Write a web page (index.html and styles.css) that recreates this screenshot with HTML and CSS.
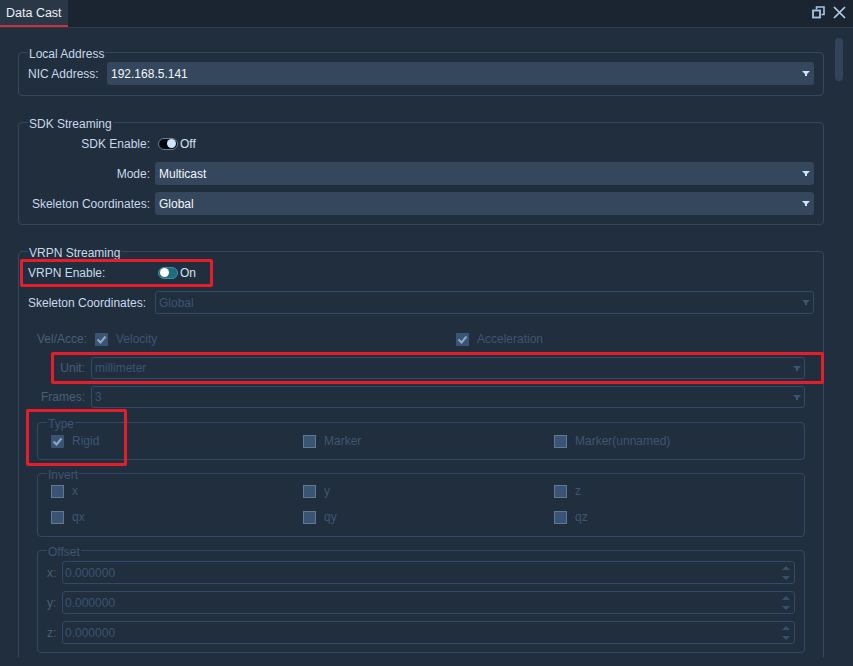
FILE: index.html
```html
<!DOCTYPE html>
<html>
<head>
<meta charset="utf-8">
<link rel="stylesheet" href="styles.css">
</head>
<body>
<div class="tabbar">
  <div class="tab">Data Cast</div>
  <div class="tools">
    <svg class="ico" width="13" height="13" viewBox="0 0 13 13"><path d="M4.5 3.5V1H12V8.5H9.5" fill="none" stroke="#a9c5e5" stroke-width="1.6"/><rect x="1" y="4.5" width="7" height="7" fill="none" stroke="#a9c5e5" stroke-width="1.8"/></svg>
    <svg class="ico" width="13" height="13" viewBox="0 0 13 13"><path d="M1 1L12 12M12 1L1 12" stroke="#b6cde8" stroke-width="1.7"/></svg>
  </div>
</div>
<div class="main">
  <div class="scroll">
    <fieldset class="group local">
      <legend>Local Address</legend>
      <div class="form form-local">
        <span>NIC Address:</span>
        <div class="combo"><span>192.168.5.141</span><svg class="arrow" width="8" height="5" viewBox="0 0 8 5"><path d="M0 0H8L5 3V5H3V3Z" fill="#cfe4fb"/></svg></div>
      </div>
    </fieldset>

    <fieldset class="group">
      <legend>SDK Streaming</legend>
      <div class="form form-sdk">
        <span class="rlab">SDK Enable:</span>
        <div class="toggle"><span class="pill off"><span class="knob"></span></span><span>Off</span></div>
        <span class="rlab">Mode:</span>
        <div class="combo"><span>Multicast</span><svg class="arrow" width="8" height="5" viewBox="0 0 8 5"><path d="M0 0H8L5 3V5H3V3Z" fill="#cfe4fb"/></svg></div>
        <span class="rlab">Skeleton Coordinates:</span>
        <div class="combo"><span>Global</span><svg class="arrow" width="8" height="5" viewBox="0 0 8 5"><path d="M0 0H8L5 3V5H3V3Z" fill="#cfe4fb"/></svg></div>
      </div>
    </fieldset>

    <fieldset class="group vrpn">
      <legend>VRPN Streaming</legend>
      <div class="form form-sdk">
        <div class="enable-row mark-enable">
          <span class="enable-lab">VRPN Enable:</span>
          <div class="toggle"><span class="pill on"><span class="knob"></span></span><span>On</span></div>
        </div>
        <span>Skeleton Coordinates:</span>
        <div class="combo dis"><span>Global</span><svg class="arrow" width="8" height="5" viewBox="0 0 8 5"><path d="M0 0H8L5 3V5H3V3Z" fill="#3b5575"/></svg></div>
      </div>

      <div class="inner">
        <div class="velrow">
          <span class="dlab vlab">Vel/Acce:</span>
          <div class="cell1"><span class="cb checked"><svg width="11" height="11" viewBox="0 0 11 11"><path d="M1.5 5.5L4.5 8.5L9.5 2.5" fill="none" stroke="#8ea8c6" stroke-width="2"/></svg></span><span class="dtext">Velocity</span></div>
          <div class="cell2"><span class="cb checked"><svg width="11" height="11" viewBox="0 0 11 11"><path d="M1.5 5.5L4.5 8.5L9.5 2.5" fill="none" stroke="#8ea8c6" stroke-width="2"/></svg></span><span class="dtext">Acceleration</span></div>
        </div>
        <div class="subform mark-unit">
          <span class="dlab rlab">Unit:</span>
          <div class="combo dis small"><span>millimeter</span><svg class="arrow" width="8" height="5" viewBox="0 0 8 5"><path d="M0 0H8L5 3V5H3V3Z" fill="#3b5575"/></svg></div>
        </div>
        <div class="subform">
          <span class="dlab rlab">Frames:</span>
          <div class="combo dis small"><span>3</span><svg class="arrow" width="8" height="5" viewBox="0 0 8 5"><path d="M0 0H8L5 3V5H3V3Z" fill="#3b5575"/></svg></div>
        </div>

        <div class="typewrap mark-type">
          <fieldset class="sub type">
            <legend>Type</legend>
            <div class="cbgrid">
              <div class="cbitem"><span class="cb checked"><svg width="11" height="11" viewBox="0 0 11 11"><path d="M1.5 5.5L4.5 8.5L9.5 2.5" fill="none" stroke="#8ea8c6" stroke-width="2"/></svg></span><span class="dtext">Rigid</span></div>
              <div class="cbitem"><span class="cb"></span><span class="dtext">Marker</span></div>
              <div class="cbitem"><span class="cb"></span><span class="dtext">Marker(unnamed)</span></div>
            </div>
          </fieldset>
        </div>

        <fieldset class="sub invert">
          <legend>Invert</legend>
          <div class="cbgrid">
            <div class="cbitem"><span class="cb"></span><span class="dtext">x</span></div>
            <div class="cbitem"><span class="cb"></span><span class="dtext">y</span></div>
            <div class="cbitem"><span class="cb"></span><span class="dtext">z</span></div>
            <div class="cbitem"><span class="cb"></span><span class="dtext">qx</span></div>
            <div class="cbitem"><span class="cb"></span><span class="dtext">qy</span></div>
            <div class="cbitem"><span class="cb"></span><span class="dtext">qz</span></div>
          </div>
        </fieldset>

        <fieldset class="sub offset">
          <legend>Offset</legend>
          <div class="spinform">
            <span class="dlab">x:</span>
            <div class="spin"><span>0.000000</span><span class="spinbtns"><svg width="8" height="4" viewBox="0 0 8 4"><path d="M4 0L8 4H0Z" fill="#36506f"/></svg><svg width="8" height="4" viewBox="0 0 8 4"><path d="M0 0H8L4 4Z" fill="#36506f"/></svg></span></div>
            <span class="dlab">y:</span>
            <div class="spin"><span>0.000000</span><span class="spinbtns"><svg width="8" height="4" viewBox="0 0 8 4"><path d="M4 0L8 4H0Z" fill="#36506f"/></svg><svg width="8" height="4" viewBox="0 0 8 4"><path d="M0 0H8L4 4Z" fill="#36506f"/></svg></span></div>
            <span class="dlab">z:</span>
            <div class="spin"><span>0.000000</span><span class="spinbtns"><svg width="8" height="4" viewBox="0 0 8 4"><path d="M4 0L8 4H0Z" fill="#36506f"/></svg><svg width="8" height="4" viewBox="0 0 8 4"><path d="M0 0H8L4 4Z" fill="#36506f"/></svg></span></div>
          </div>
        </fieldset>
      </div>
    </fieldset>
  </div>
  <div class="vscroll"><div class="handle"></div></div>
</div>
</body>
</html>
```

FILE: styles.css
```css
*, *::before, *::after { box-sizing: border-box; }
html, body { margin: 0; padding: 0; }
body {
  width: 853px;
  height: 666px;
  overflow: hidden;
  background: #212e3d;
  font-family: "Liberation Sans", Arial, sans-serif;
  font-size: 12px;
  color: #c8d9ec;
}

.tabbar {
  height: 28px;
  background: #1b2531;
  border-bottom: 1px solid #2e3c4d;
  display: flex;
  justify-content: space-between;
}
.tab {
  width: 68px;
  height: 27px;
  background: #2a3747;
  border-bottom: 2px solid #cc2f3b;
  color: #eaf0f8;
  font-size: 12.5px;
  line-height: 14px;
  padding: 6px 0 0 6px;
}
.tools {
  display: flex;
  gap: 8px;
  padding: 6px 7px 0 0;
}
.ico { display: block; }

.main {
  display: flex;
  height: 638px;
}
.scroll {
  position: relative;
  width: 824px;
  height: 629px;
  overflow: hidden;
  padding: 15px 0 0 18px;
}
.vscroll {
  margin-left: 11px;
  width: 8px;
  padding-top: 10px;
}
.handle {
  height: 43px;
  background: #33435a;
  border-radius: 4px;
}

fieldset { margin: 0; min-width: 0; }
legend {
  padding: 4px 1px 0 1px;
  line-height: 14px;
  font-size: 12px;
}

.group {
  margin: 0 0 17px 0;
  border: 1px solid #37475b;
  border-radius: 4px;
  padding: 1px 9px 9px 9px;
}
.group legend { color: #c8d9ec; }
.local { padding-bottom: 10px; }

.form {
  display: grid;
  column-gap: 5px;
  row-gap: 7px;
  align-items: center;
}
.form-local { grid-template-columns: 74px 1fr; }
.form-sdk { grid-template-columns: 122px 1fr; }
.rlab { text-align: right; }

.combo {
  height: 23px;
  background: #35475c;
  border-radius: 3px;
  display: flex;
  align-items: center;
  justify-content: space-between;
  padding: 0 4px 0 4px;
  color: #f2f7fd;
}
.combo.dis {
  background: transparent;
  border: 1px solid #2f4a6a;
  color: #3b5473;
  padding: 0 3px 0 3px;
}
.combo.small { height: 22px; }
.arrow { display: block; }

.toggle {
  display: flex;
  align-items: center;
  gap: 2px;
  margin-left: 3px;
  height: 23px;
  color: #d6e4f3;
}
.pill {
  width: 20px;
  height: 12px;
  border-radius: 6px;
  display: flex;
  align-items: center;
  padding: 0 1px;
}
.pill.off {
  background: #04070b;
  border: 1px solid #6d7f95;
  justify-content: flex-end;
}
.pill.on {
  background: #1d6c80;
  border: 1px solid #3f8ea3;
  justify-content: flex-start;
}
.knob {
  width: 9px;
  height: 9px;
  border-radius: 50%;
}
.off .knob { background: #cfe5fb; }
.on .knob { background: #ffffff; }

.enable-row {
  grid-column: 1 / 3;
  display: flex;
  align-items: center;
  height: 23px;
  position: relative;
}
.enable-lab { width: 130px; }
.enable-row .toggle { margin-left: 0; }

/* red annotation boxes drawn over content */
.mark-enable::after,
.mark-unit::after,
.mark-type::after {
  content: "";
  position: absolute;
  border: 3px solid #e61e2b;
  border-radius: 2px;
  pointer-events: none;
}
.mark-enable::after { left: -8px; top: -2px; width: 193px; height: 28px; }
.mark-unit { position: relative; }
.mark-unit::after { left: 14px; top: -5px; width: 773px; height: 32px; }
.mark-type { position: relative; }
.mark-type::after { left: -11px; top: -4px; width: 101px; height: 57px; }

.inner { margin: 14px 9px 0 9px; }
.dlab { color: #4a5f79; }
.dtext { color: #3d5674; }

.velrow {
  display: flex;
  align-items: center;
  height: 22px;
}
.vlab { width: 58px; }
.cell1 { width: 361px; display: flex; align-items: center; gap: 8px; }
.cell2 { display: flex; align-items: center; gap: 8px; }

.subform {
  display: grid;
  grid-template-columns: 48px 1fr;
  column-gap: 6px;
  align-items: center;
  margin-top: 7px;
}

.cb {
  width: 13px;
  height: 13px;
  flex: none;
  background: #3a5474;
  border: 1px solid #5e7998;
  display: flex;
  align-items: center;
  justify-content: center;
}
.cb.checked { border-color: #3a5474; }
.cb svg { display: block; }

.sub {
  border: 1px solid #2f4968;
  border-radius: 4px;
  padding: 0 13px 10px 13px;
  margin-top: 4px;
}
.sub legend { color: #3d5674; margin-left: -4px; }
.typewrap { margin-top: 5px; }
.type { margin-top: 0; padding-top: 1px; padding-bottom: 9px; }

.cbgrid {
  display: grid;
  grid-template-columns: 252px 251px 1fr;
  grid-auto-rows: 18px;
  row-gap: 8px;
  align-items: center;
}
.cbitem { display: flex; align-items: center; gap: 8px; }

.offset { padding: 2px 9px 8px 9px; }
.offset legend { margin-left: 0; }
.spinform {
  display: grid;
  grid-template-columns: 11px 1fr;
  column-gap: 4px;
  row-gap: 7px;
  align-items: center;
}
.spin {
  height: 23px;
  border: 1px solid #2f4a6a;
  border-radius: 3px;
  display: flex;
  align-items: center;
  justify-content: space-between;
  padding: 0 4px 0 2px;
  color: #3b5473;
}
.spinbtns {
  display: flex;
  flex-direction: column;
  gap: 6px;
}
.spinbtns svg { display: block; }
```
